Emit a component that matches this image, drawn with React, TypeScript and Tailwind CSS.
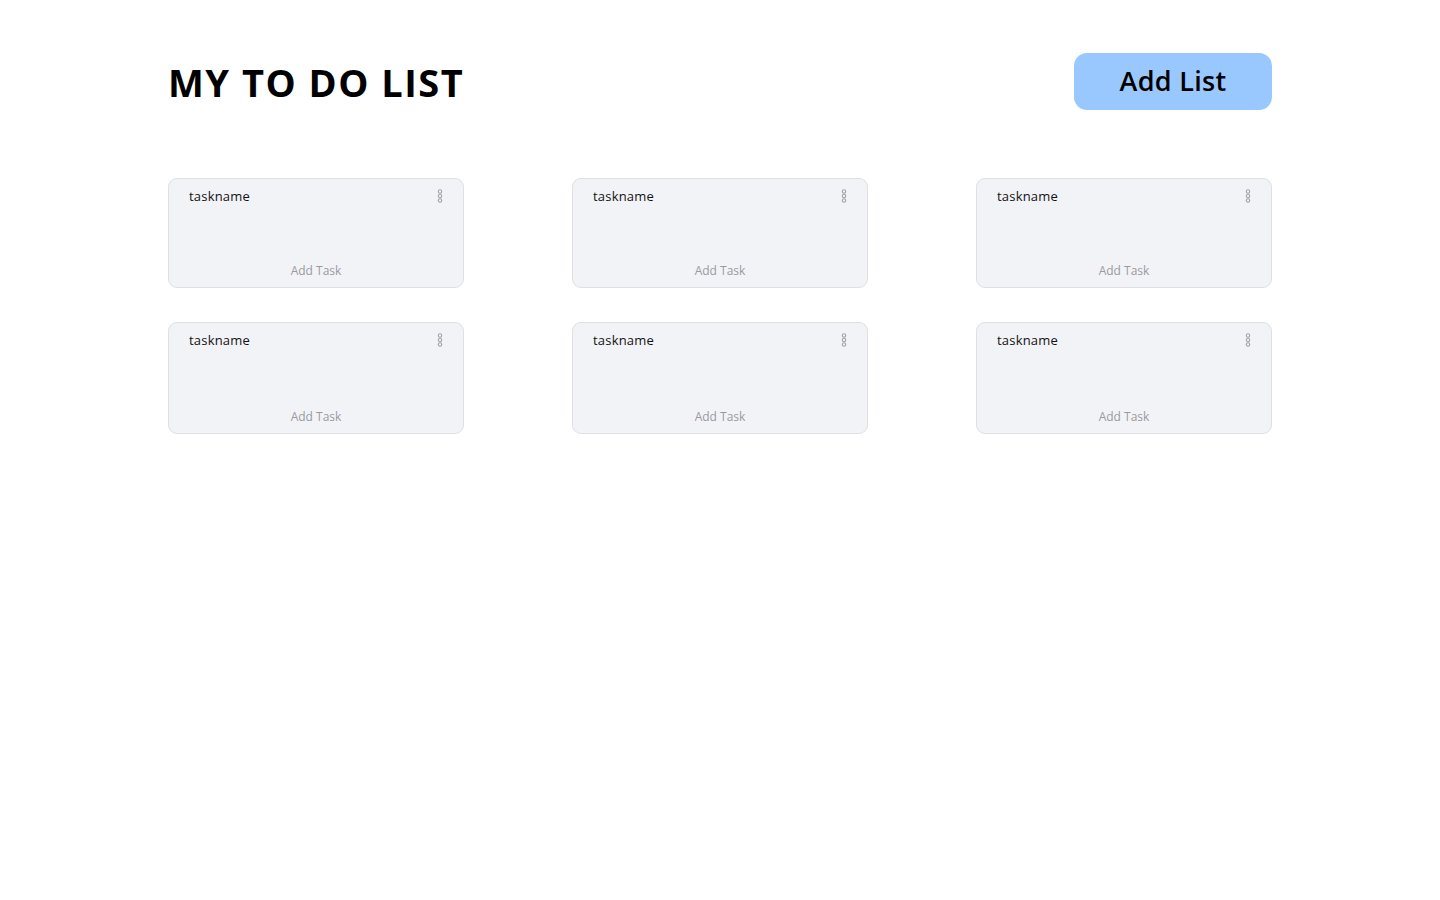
import React from "react";

function Dots() {
  return (
    <svg width="6" height="14" viewBox="0 0 6 14" className="shrink-0 -mt-[1px]">
      <circle cx="3" cy="2.5" r="1.7" fill="none" stroke="#a3a3a8" strokeWidth="1.1" />
      <circle cx="3" cy="7" r="1.7" fill="none" stroke="#a3a3a8" strokeWidth="1.1" />
      <circle cx="3" cy="11.5" r="1.7" fill="none" stroke="#a3a3a8" strokeWidth="1.1" />
    </svg>
  );
}

function Card({ tall }: { tall?: boolean }) {
  return (
    <div
      className={`flex flex-col rounded-[9px] border border-[#dfe0e4] bg-[#f2f3f7] ${
        tall ? "h-[112px]" : "h-[110px]"
      }`}
    >
      <div className="flex items-center justify-between pl-[20px] pr-[20px] pt-[8px]">
        <span className="text-[13px] tracking-[0.2px] text-[#111]">taskname</span>
        <Dots />
      </div>
      <div className="flex-1" />
      <div className="pb-[7px] text-center text-[12px] text-[#9a9a9e]">Add Task</div>
    </div>
  );
}

export default function App() {
  return (
    <div
      className="min-h-[900px] w-full bg-white"
      style={{ fontFamily: '"Open Sans", "Liberation Sans", sans-serif' }}
    >
      <div className="mx-auto w-[1104px] pt-[53px]">
        <div className="flex items-center justify-between">
          <h1 className="text-[38px] font-bold leading-none tracking-[1.5px] text-black">MY TO DO LIST</h1>
          <button className="flex h-[57px] w-[198px] items-center justify-center rounded-[13px] bg-[#99c8fe] text-[27px] font-semibold tracking-[0.3px] text-black">
            Add List
          </button>
        </div>
        <div className="mt-[68px] grid grid-cols-3 gap-x-[108px] gap-y-[34px]">
          <Card />
          <Card />
          <Card />
          <Card tall />
          <Card tall />
          <Card tall />
        </div>
      </div>
    </div>
  );
}
